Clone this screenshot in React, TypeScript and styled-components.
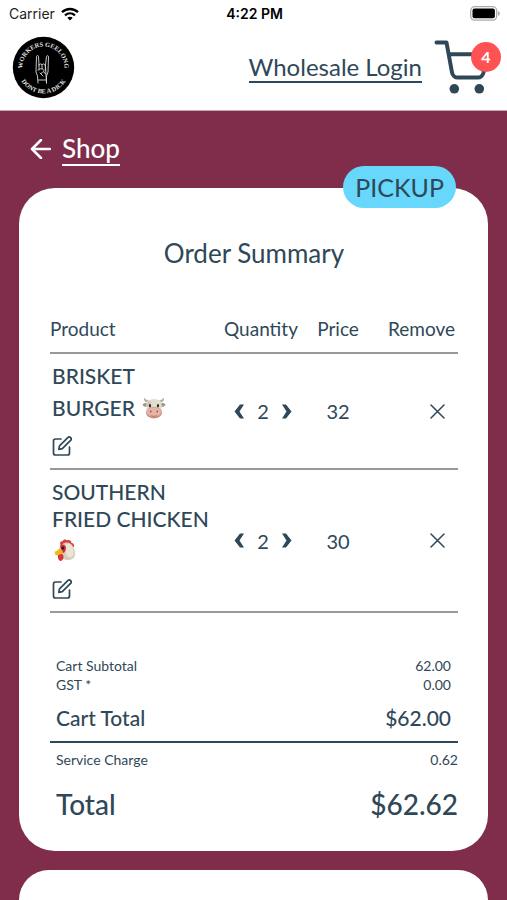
import React from 'react';
import styled, { createGlobalStyle } from 'styled-components';

const navy = '#2f4858';
const wine = '#7f2d4a';

const GlobalStyle = createGlobalStyle`
  *, *::before, *::after { box-sizing: border-box; }
  html, body { margin: 0; padding: 0; }
  body {
    background: ${wine};
    color: ${navy};
    font-family: Lato, 'Open Sans', sans-serif;
  }
  button { font: inherit; color: inherit; background: none; border: 0; padding: 0; cursor: pointer; }
  a { color: inherit; text-decoration: none; }
  svg { display: block; flex: none; }
`;

const Page = styled.div`
  display: flex;
  flex-direction: column;
  min-height: 100vh;
`;

const StatusBar = styled.div`
  display: grid;
  grid-template-columns: 1fr auto 1fr;
  align-items: center;
  height: 27px;
  padding: 0 7px 0 9px;
  background: #fff;
  color: #222;
  font: 400 14px/18px Inter, sans-serif;
`;

const Carrier = styled.div`
  display: flex;
  align-items: center;
  gap: 6px;
`;

const Clock = styled.div`
  font-weight: 600;
  color: #000;
`;

const BatteryIcon = styled.svg`
  justify-self: end;
`;

const Header = styled.header`
  display: flex;
  align-items: center;
  justify-content: space-between;
  height: 84px;
  padding: 0 6px 2px 12px;
  background: #fff;
  border-bottom: 1px solid #c9a5b2;
`;

const HeaderActions = styled.div`
  display: flex;
  align-items: center;
  gap: 12px;
`;

const LoginLink = styled.a`
  border-bottom: 2px solid ${navy};
  font-size: 24px;
  line-height: 28px;
`;

const CartButton = styled.button`
  position: relative;
  width: 67px;
  height: 56px;
`;

const CartCount = styled.span`
  position: absolute;
  top: 2px;
  right: 0;
  width: 30px;
  height: 30px;
  border-radius: 50%;
  background: #ff5252;
  color: #fff;
  font-size: 16px;
  font-weight: 700;
  line-height: 30px;
  text-align: center;
`;

const Main = styled.main`
  display: flex;
  flex: 1;
  flex-direction: column;
  padding: 21px 19px 0;
`;

const BackLink = styled.a`
  display: flex;
  align-items: center;
  align-self: flex-start;
  gap: 11px;
  margin: 0 0 22px 11px;
  color: #fff;
  font-size: 26px;
  font-weight: 500;
  line-height: 32px;
`;

const BackLabel = styled.span`
  border-bottom: 2px solid #fff;
`;

const Card = styled.section`
  position: relative;
  padding: 49px 30px 29px 31px;
  border-radius: 36px;
  background: #fff;
`;

const NextCard = styled.section`
  flex: 1;
  margin-top: 19px;
  border-radius: 36px 36px 0 0;
  background: #fff;
`;

const Badge = styled.span`
  position: absolute;
  top: -22px;
  right: 32px;
  padding: 0 12px;
  border-radius: 21px;
  background: #67d7fc;
  font-size: 25px;
  line-height: 42px;
`;

const Title = styled.h1`
  margin: 0 0 48px;
  font-size: 26px;
  font-weight: 400;
  line-height: 32px;
  text-align: center;
`;

const Table = styled.table`
  width: 100%;
  border-collapse: collapse;
  table-layout: fixed;
`;

const HeadCell = styled.th<{ $width?: number; $align?: string }>`
  width: ${(p) => (p.$width ? `${p.$width}px` : 'auto')};
  padding: 0 0 11px;
  border-bottom: 2px solid #999;
  font-size: 19px;
  font-weight: 400;
  line-height: 24px;
  text-align: ${(p) => p.$align || 'left'};

  &:last-child { padding-right: 3px; }
`;

const Cell = styled.td<{ $align?: string }>`
  padding: 0;
  border-bottom: 2px solid #999;
  font-size: 20px;
  text-align: ${(p) => p.$align || 'left'};
  vertical-align: middle;
`;

const Product = styled.div`
  display: flex;
  flex-direction: column;
  align-items: flex-start;
  gap: 10px;
  padding: 8px 0 12px 2px;
`;

const ProductName = styled.div`
  font-size: 21px;
  font-weight: 500;
  line-height: 27px;
`;

const EmojiBox = styled.span`
  display: inline-flex;
  align-items: center;
  height: 37px;
  margin-left: 2px;
  vertical-align: -3px;
`;

const Stepper = styled.div`
  display: flex;
  align-items: center;
  justify-content: center;
  gap: 13px;
  padding-left: 4px;
`;

const RemoveButton = styled.button`
  display: block;
  margin: 0 13px 0 auto;
`;

const Totals = styled.dl`
  margin: 43px 0 0;
`;

const sizes = {
  small: { font: 14, line: 19, weight: 400 },
  medium: { font: 21, line: 27, weight: 500 },
  large: { font: 28, line: 36, weight: 500 },
};

const TotalRow = styled.div<{ $size: keyof typeof sizes; $inset?: boolean }>`
  display: flex;
  justify-content: space-between;
  padding: 0 ${(p) => (p.$inset ? 7 : 0)}px 0 6px;
  font-size: ${(p) => sizes[p.$size].font}px;
  font-weight: ${(p) => sizes[p.$size].weight};
  line-height: ${(p) => sizes[p.$size].line}px;

  dd { margin: 0; }
`;

const TotalGroup = styled.div<{ $ruled?: boolean }>`
  display: flex;
  flex-direction: column;
  gap: ${(p) => (p.$ruled ? 17 : 0)}px;
  padding-top: ${(p) => (p.$ruled ? 7 : 0)}px;
  border-top: ${(p) => (p.$ruled ? `2px solid ${navy}` : '0')};
`;

const CartTotal = styled(TotalRow)`
  margin: 10px 0;
`;

function Wifi() {
  return (
    <svg width="18" height="14" viewBox="0 0 18 14" fill="none" stroke="#000" strokeWidth="2.3" aria-label="Wi-Fi">
      <path d="M1 5.2c4.6-4.3 11.4-4.3 16 0M4 8.3c3-2.7 7-2.7 10 0" />
      <path d="M9 13.5l-2.7-2.7c1.5-1.3 3.9-1.3 5.4 0z" fill="#000" stroke="none" />
    </svg>
  );
}

function Battery() {
  return (
    <BatteryIcon width="30" height="15" viewBox="0 0 30 15" aria-label="Battery full">
      <rect x="0.7" y="0.7" width="26" height="13.4" rx="4" fill="#fff" stroke="#aaa" strokeWidth="1.3" />
      <rect x="2.5" y="2.5" width="22.4" height="9.8" rx="2" fill="#000" />
      <path d="M28 5c2.4.8 2.4 4 0 4.8z" fill="#aaa" />
    </BatteryIcon>
  );
}

function Logo() {
  return (
    <svg width="63" height="63" viewBox="0 0 63 63" role="img" aria-label="Workers Geelong">
      <defs>
        <path id="logo-top" d="M10.5 31.5a21 21 0 0 1 42 0" />
        <path id="logo-bottom" d="M5.5 31.5a26 26 0 0 0 52 0" />
      </defs>
      <circle cx="31.5" cy="31.5" r="30.7" fill="#000" />
      <g fill="#e2e2e2" fontFamily="Liberation Serif, serif" fontSize="6.4" fontWeight="700" textAnchor="middle">
        <text><textPath href="#logo-top" startOffset="50%">WORKERS GEELONG</textPath></text>
        <text><textPath href="#logo-bottom" startOffset="50%">DONT BE A DICK</textPath></text>
      </g>
      <g fill="none" stroke="#ddd" strokeWidth="0.9" strokeLinejoin="round" strokeLinecap="round" transform="translate(-1 1)">
        <path d="M27 46l-.5-7-1.5-4 .5-15.5c.2-1.2 1.8-1.2 2 0l.5 8.5M28 28c.5-1.5 2.5-1.5 3 0 .5-1.5 2.5-1.5 3 0M34.5 28l1-8.5c.3-1.2 2-1 2 .2l-.5 15.3-1.5 4v7zM28 28v5M31 28v4M34.3 28v5" />
        <path d="M27 33c2-2 5.5-1.5 6 .5s-3 1.5-3 3M27.5 43h7M29 36l3 3M33 35l1.5 2" />
      </g>
    </svg>
  );
}

function CartIcon() {
  return (
    <svg width="54" height="56" viewBox="0 0 54 56" fill="none" stroke={navy} strokeWidth="4" strokeLinecap="round" strokeLinejoin="round">
      <path d="M2.5 2.5h10l5.5 30a6 6 0 0 0 6 5H43.500a6 6 0 0 0 6-5L52 14.3H15" />
      <circle cx="20.3" cy="48.8" r="4.8" fill={navy} stroke="none" />
      <circle cx="45.3" cy="48.8" r="4.8" fill={navy} stroke="none" />
    </svg>
  );
}

function ArrowLeft() {
  return (
    <svg width="21" height="20" viewBox="0 0 21 20" fill="none" stroke="#fff" strokeWidth="2.5" strokeLinecap="round" strokeLinejoin="round">
      <path d="M20 10H2M11 1L2 10l9 9" />
    </svg>
  );
}

function EditIcon() {
  return (
    <svg width="20" height="20" viewBox="0 0 20 20" fill="none" stroke={navy} strokeWidth="1.7" strokeLinecap="round" strokeLinejoin="round">
      <path d="M9 3H3.5a2 2 0 0 0-2 2v12a2 2 0 0 0 2 2h12a2 2 0 0 0 2-2v-6" />
      <path d="M15.8 1.6a1.95 1.95 0 0 1 2.8 2.8L10.3 12.7l-3.5.7.7-3.5z" />
    </svg>
  );
}

function Chevron({ next }: { next?: boolean }) {
  return (
    <svg width="10" height="15" viewBox="0 0 10 15" fill={navy}>
      <path d={next ? 'M0 .5h4L9.5 7.5 4 14.5H0l4.500-7z' : 'M10 .5H6L.5 7.5 6 14.5h4L5.5 7.5z'} />
    </svg>
  );
}

function CrossIcon() {
  return (
    <svg width="15" height="15" viewBox="0 0 15 15" fill="none" stroke={navy} strokeWidth="1.5" strokeLinecap="round">
      <path d="M1 1l13 13M14 1L1 14" />
    </svg>
  );
}

function Cow() {
  return (
    <svg width="24" height="22" viewBox="0 0 24 22" role="img" aria-label="cow">
      <path d="M5.5 5.5C2 5 1.5 2.5 2.5.5c.5 2 2 2.5 4.5 3M18.5 5.5c3.5-.5 4-3 3-5-.5 2-2 2.5-4.5 3" fill="#b5ada0" />
      <path d="M5 6.5C3 5.5 1 6.5.5 8c1.5 2 3.5 2 5 1.5M19 6.5c2-1 4 0 4.5 1.5-1.5 2-3.5 2-5 1.5" fill="#a0958a" />
      <path d="M5 4.5c4-3.5 10-3.5 14 0 1.2 3 .5 8 0 11H5c-.5-3-1.2-8 0-11z" fill="#e3ddd0" />
      <path d="M5 6c1-1.500 3-2 4-1.500.5 2-.5 5-2.500 6-1.500-.5-2-3-1.500-4.500z" fill="#cfc7b9" />
      <ellipse cx="12" cy="15.7" rx="8" ry="5.8" fill="#c99080" />
      <ellipse cx="12" cy="15" rx="7.2" ry="4.6" fill="#e6b4a4" />
      <ellipse cx="8" cy="8.8" rx="1.1" ry="1.7" fill="#292522" />
      <ellipse cx="16" cy="8.8" rx="1.1" ry="1.7" fill="#292522" />
      <ellipse cx="8.8" cy="14.5" rx="0.8" ry="1.1" fill="#8c5046" />
      <ellipse cx="15.2" cy="14.5" rx="0.8" ry="1.1" fill="#8c5046" />
      <path d="M9 18.5c2 1 4 1 6 0" stroke="#a06457" strokeWidth="0.7" fill="none" />
    </svg>
  );
}

function Chicken() {
  return (
    <svg width="22" height="23" viewBox="0 0 22 23" role="img" aria-label="chicken">
      <path d="M6.5 6C5.5 3 7 1.5 8.5 2.5 9.5 0 12 0 13 1.5c2-1 4.5 0 4.5 2.5 2 0 3 2 2.5 4L10 9z" fill="#d93a3c" />
      <path d="M8 5.5c4-3.5 9-2 11 2 2.5 5 3 9 .5 11.5-3 3-9 2.500-11.500 0z" fill="#d8cebd" />
      <path d="M12 5.5c4-2 6 1 7 4.5s1 6-1 7.5-5 .5-6-3-2-7 0-9z" fill="#ece4d7" />
      <path d="M6 7c2-2.5 6-1.5 6 2s-2 5.5-4.5 5z" fill="#c9343a" />
      <path d="M4 14.5c2.5-1.5 5 0 5.500 3 .5 2-1 4-2.500 4.500-3 0-3.500-4.500-3-7.500z" fill="#d5353c" />
      <path d="M6 8.5C5 10.5 2.5 12 0 13c2 1 1.5 2 .5 2.8 3 1 7.5 0 8.5-2.8z" fill="#f2b51d" />
      <circle cx="8.8" cy="9" r="1.5" fill="#2b1c1b" />
    </svg>
  );
}

const items = [
  { name: 'BRISKET BURGER', Emoji: Cow, quantity: 2, price: 32 },
  { name: 'SOUTHERN FRIED CHICKEN', Emoji: Chicken, quantity: 2, price: 30 },
];

export default function App() {
  return (
    <Page>
      <GlobalStyle />
      <StatusBar>
        <Carrier>Carrier <Wifi /></Carrier>
        <Clock>4:22 PM</Clock>
        <Battery />
      </StatusBar>
      <Header>
        <a href="#home" aria-label="Home"><Logo /></a>
        <HeaderActions>
          <LoginLink href="#login">Wholesale Login</LoginLink>
          <CartButton type="button" aria-label="Cart, 4 items">
            <CartIcon />
            <CartCount>4</CartCount>
          </CartButton>
        </HeaderActions>
      </Header>
      <Main>
        <BackLink href="#shop"><ArrowLeft /><BackLabel>Shop</BackLabel></BackLink>
        <Card>
          <Badge>PICKUP</Badge>
          <Title>Order Summary</Title>
          <Table>
            <thead>
              <tr>
                <HeadCell scope="col">Product</HeadCell>
                <HeadCell scope="col" $width={88} $align="center">Quantity</HeadCell>
                <HeadCell scope="col" $width={66} $align="center">Price</HeadCell>
                <HeadCell scope="col" $width={87} $align="right">Remove</HeadCell>
              </tr>
            </thead>
            <tbody>
              {items.map(({ name, Emoji, quantity, price }) => (
                <tr key={name}>
                  <Cell>
                    <Product>
                      <ProductName>{name} <EmojiBox><Emoji /></EmojiBox></ProductName>
                      <button type="button" aria-label={`Edit ${name}`}><EditIcon /></button>
                    </Product>
                  </Cell>
                  <Cell>
                    <Stepper>
                      <button type="button" aria-label="Decrease quantity"><Chevron /></button>
                      <span>{quantity}</span>
                      <button type="button" aria-label="Increase quantity"><Chevron next /></button>
                    </Stepper>
                  </Cell>
                  <Cell $align="center">{price}</Cell>
                  <Cell>
                    <RemoveButton type="button" aria-label={`Remove ${name}`}><CrossIcon /></RemoveButton>
                  </Cell>
                </tr>
              ))}
            </tbody>
          </Table>
          <Totals>
            <TotalGroup>
              <TotalRow $size="small" $inset><dt>Cart Subtotal</dt><dd>62.00</dd></TotalRow>
              <TotalRow $size="small" $inset><dt>GST *</dt><dd>0.00</dd></TotalRow>
              <CartTotal $size="medium" $inset><dt>Cart Total</dt><dd>$62.00</dd></CartTotal>
            </TotalGroup>
            <TotalGroup $ruled>
              <TotalRow $size="small"><dt>Service Charge</dt><dd>0.62</dd></TotalRow>
              <TotalRow $size="large"><dt>Total</dt><dd>$62.62</dd></TotalRow>
            </TotalGroup>
          </Totals>
        </Card>
        <NextCard />
      </Main>
    </Page>
  );
}
